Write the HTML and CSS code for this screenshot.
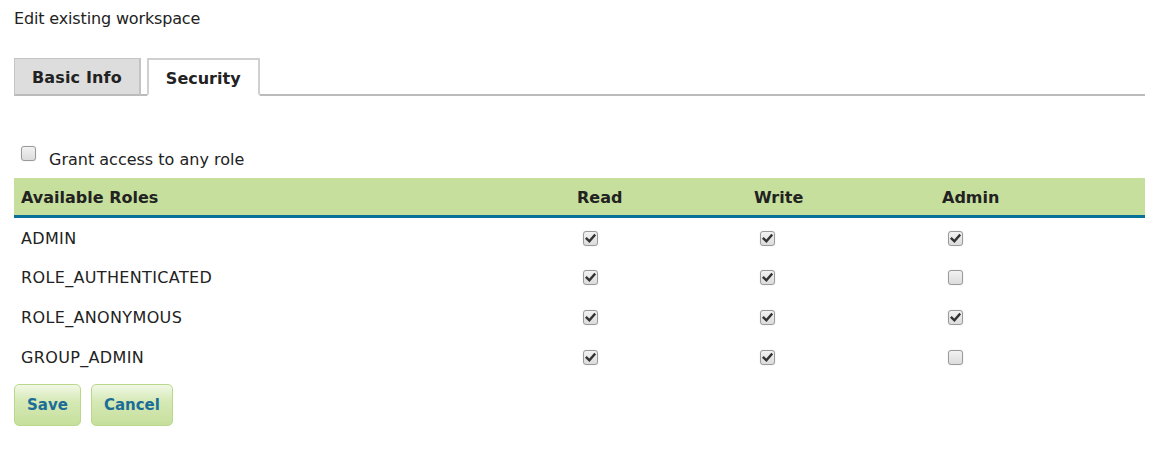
FILE: index.html
```html
<!DOCTYPE html>
<html>
<head>
<meta charset="utf-8">
<link rel="stylesheet" href="styles.css">
</head>
<body>
<div class="page">
  <div class="title">Edit existing workspace</div>
  <div class="tabs">
    <div class="tab">Basic Info</div>
    <div class="tab active">Security</div>
  </div>
  <label class="grant"><span class="cb"></span><span class="grant-text">Grant access to any role</span></label>
  <table class="roles">
    <colgroup><col class="c1"><col class="c2"><col class="c3"><col class="c4"></colgroup>
    <thead>
      <tr><th>Available Roles</th><th>Read</th><th>Write</th><th>Admin</th></tr>
    </thead>
    <tbody>
      <tr><td>ADMIN</td>
        <td><span class="cb on"><svg viewBox="0 0 10 10"><path d="M1.5 5.2 L4 7.6 L8.6 2.2"/></svg></span></td>
        <td><span class="cb on"><svg viewBox="0 0 10 10"><path d="M1.5 5.2 L4 7.6 L8.6 2.2"/></svg></span></td>
        <td><span class="cb on"><svg viewBox="0 0 10 10"><path d="M1.5 5.2 L4 7.6 L8.6 2.2"/></svg></span></td></tr>
      <tr><td>ROLE_AUTHENTICATED</td>
        <td><span class="cb on"><svg viewBox="0 0 10 10"><path d="M1.5 5.2 L4 7.6 L8.6 2.2"/></svg></span></td>
        <td><span class="cb on"><svg viewBox="0 0 10 10"><path d="M1.5 5.2 L4 7.6 L8.6 2.2"/></svg></span></td>
        <td><span class="cb"></span></td></tr>
      <tr><td>ROLE_ANONYMOUS</td>
        <td><span class="cb on"><svg viewBox="0 0 10 10"><path d="M1.5 5.2 L4 7.6 L8.6 2.2"/></svg></span></td>
        <td><span class="cb on"><svg viewBox="0 0 10 10"><path d="M1.5 5.2 L4 7.6 L8.6 2.2"/></svg></span></td>
        <td><span class="cb on"><svg viewBox="0 0 10 10"><path d="M1.5 5.2 L4 7.6 L8.6 2.2"/></svg></span></td></tr>
      <tr><td>GROUP_ADMIN</td>
        <td><span class="cb on"><svg viewBox="0 0 10 10"><path d="M1.5 5.2 L4 7.6 L8.6 2.2"/></svg></span></td>
        <td><span class="cb on"><svg viewBox="0 0 10 10"><path d="M1.5 5.2 L4 7.6 L8.6 2.2"/></svg></span></td>
        <td><span class="cb"></span></td></tr>
    </tbody>
  </table>
  <div class="buttons">
    <button class="btn">Save</button>
    <button class="btn">Cancel</button>
  </div>
</div>
</body>
</html>
```

FILE: styles.css
```css
html, body {
  margin: 0;
  padding: 0;
  background: #fff;
}
body {
  font-family: "DejaVu Sans", Verdana, sans-serif;
  font-size: 16px;
  color: #222;
}
.page {
  padding: 9px 14px 0 14px;
  width: 1131px;
}
.title {
  line-height: 20px;
  height: 20px;
  letter-spacing: -0.15px;
}
.tabs {
  display: flex;
  gap: 6px;
  margin-top: 29px;
  border-bottom: 2px solid #bbb;
  height: 36px;
}
.tab {
  box-sizing: border-box;
  height: 38px;
  margin-bottom: -2px;
  padding: 2px 17px 0 17px;
  display: flex;
  align-items: center;
  font-weight: bold;
  font-size: 16px;
  letter-spacing: 0.15px;
  background: #ddd;
  border: 1px solid #c4c4c4;
  border-right: 2px solid #c4c4c4;
  border-bottom: 2px solid #bbb;
}
.tab.active {
  background: #fff;
  border: 2px solid #d0d0d0;
  border-bottom: 2px solid #fff;
  padding: 2px 17px 0 17px;
  letter-spacing: 0;
}
.grant {
  display: flex;
  align-items: center;
  gap: 13px;
  margin-top: 48px;
  padding-left: 7px;
  height: 24px;
}
.grant .cb {
  position: relative;
  top: -3px;
}
.grant-text {
  position: relative;
  top: 3px;
}
.cb {
  box-sizing: border-box;
  display: inline-flex;
  align-items: center;
  justify-content: center;
  width: 15px;
  height: 15px;
  border: 1px solid #9a9a9a;
  border-radius: 3px;
  background: linear-gradient(#f2f2f2, #dcdcdc);
  box-shadow: 0 0 1px rgba(0,0,0,0.25);
  vertical-align: middle;
}
.cb svg {
  width: 11px;
  height: 11px;
  fill: none;
  stroke: #333;
  stroke-width: 2.2;
  stroke-linecap: square;
  stroke-linejoin: miter;
}
.roles {
  margin-top: 10px;
  width: 1131px;
  border-collapse: collapse;
  table-layout: fixed;
}
.c1 { width: 556px; }
.c2 { width: 177px; }
.c3 { width: 188px; }
.c4 { width: 210px; }
.roles th {
  background: #c6df9c;
  border-bottom: 3px solid #0a7299;
  text-align: left;
  font-weight: bold;
  height: 38px;
  padding: 3px 7px 0 7px;
  box-sizing: border-box;
}
.roles td {
  height: 40px;
  padding: 3px 7px 0 7px;
  box-sizing: border-box;
  letter-spacing: 0.35px;
}
.roles td .cb {
  margin-left: 6px;
  position: relative;
  top: -1px;
}
.buttons {
  display: flex;
  gap: 10px;
  margin-top: 8px;
}
.btn {
  box-sizing: border-box;
  height: 42px;
  padding: 0 12px;
  font-family: "DejaVu Sans", Verdana, sans-serif;
  font-weight: bold;
  font-size: 15px;
  color: #1b6d98;
  border: 1px solid #b9d88c;
  border-radius: 5px;
  background: linear-gradient(#f1f8e6 0%, #d6e9b6 40%, #c6df9c 100%);
}
```
